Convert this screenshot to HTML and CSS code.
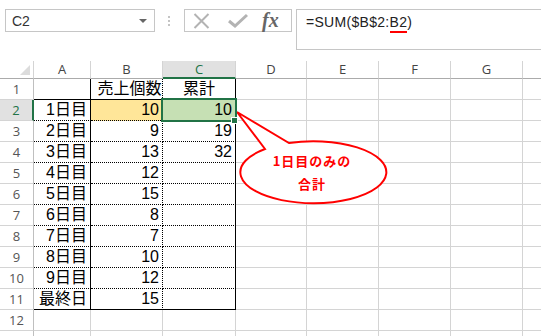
FILE: index.html
```html
<!DOCTYPE html>
<html lang="ja">
<head>
<meta charset="utf-8">
<title>Excel</title>
<link rel="stylesheet" href="styles.css">
</head>
<body>
<div class="app">
  <div class="fbar">
    <div class="namebox"><span class="nb-text">C2</span><span class="nb-arrow"></span></div>
    <div class="grip"><i></i><i></i><i></i></div>
    <div class="fbtns">
      <svg class="ic-x" width="17" height="16" viewBox="0 0 17 16"><path d="M1.5 1 L15.5 15 M15.5 1 L1.5 15" stroke="#b3b3b3" stroke-width="2" fill="none"/></svg>
      <svg class="ic-ok" width="20" height="15" viewBox="0 0 20 15"><path d="M1 8 L7 13 L19 2" stroke="#b3b3b3" stroke-width="3" fill="none"/></svg>
      <span class="fx">fx</span>
    </div>
    <div class="formula">=SUM($B$2:<span class="ref">B2</span>)</div>
  </div>

  <div class="sheet">
    <div class="corner"><span class="tri"></span></div>
    <div class="ch">A</div><div class="ch">B</div><div class="ch sel">C</div><div class="ch">D</div><div class="ch">E</div><div class="ch">F</div><div class="ch">G</div><div class="ch last"></div>

    <div class="rh">1</div>
    <div class="c kr kb"></div><div class="c t hb dr kb">売上個数</div><div class="c t kr kb">累計</div><div class="c"></div><div class="c"></div><div class="c"></div><div class="c"></div><div class="c last"></div>

    <div class="rh selr">2</div>
    <div class="c n kr db">1日目</div><div class="c n dr db yel">10</div><div class="c n kr db grn cur">10</div><div class="c"></div><div class="c"></div><div class="c"></div><div class="c"></div><div class="c last"></div>

    <div class="rh">3</div>
    <div class="c n kr db">2日目</div><div class="c n dr db">9</div><div class="c n kr db">19</div><div class="c"></div><div class="c"></div><div class="c"></div><div class="c"></div><div class="c last"></div>

    <div class="rh">4</div>
    <div class="c n kr db">3日目</div><div class="c n dr db">13</div><div class="c n kr db">32</div><div class="c"></div><div class="c"></div><div class="c"></div><div class="c"></div><div class="c last"></div>

    <div class="rh">5</div>
    <div class="c n kr db">4日目</div><div class="c n dr db">12</div><div class="c n kr db"></div><div class="c"></div><div class="c"></div><div class="c"></div><div class="c"></div><div class="c last"></div>

    <div class="rh">6</div>
    <div class="c n kr db">5日目</div><div class="c n dr db">15</div><div class="c n kr db"></div><div class="c"></div><div class="c"></div><div class="c"></div><div class="c"></div><div class="c last"></div>

    <div class="rh">7</div>
    <div class="c n kr db">6日目</div><div class="c n dr db">8</div><div class="c n kr db"></div><div class="c"></div><div class="c"></div><div class="c"></div><div class="c"></div><div class="c last"></div>

    <div class="rh">8</div>
    <div class="c n kr db">7日目</div><div class="c n dr db">7</div><div class="c n kr db"></div><div class="c"></div><div class="c"></div><div class="c"></div><div class="c"></div><div class="c last"></div>

    <div class="rh">9</div>
    <div class="c n kr db">8日目</div><div class="c n dr db">10</div><div class="c n kr db"></div><div class="c"></div><div class="c"></div><div class="c"></div><div class="c"></div><div class="c last"></div>

    <div class="rh">10</div>
    <div class="c n kr db">9日目</div><div class="c n dr db">12</div><div class="c n kr db"></div><div class="c"></div><div class="c"></div><div class="c"></div><div class="c"></div><div class="c last"></div>

    <div class="rh">11</div>
    <div class="c n kr kb">最終日</div><div class="c n dr kb">15</div><div class="c n kr kb"></div><div class="c"></div><div class="c"></div><div class="c"></div><div class="c"></div><div class="c last"></div>

    <div class="rh">12</div>
    <div class="c"></div><div class="c"></div><div class="c"></div><div class="c"></div><div class="c"></div><div class="c"></div><div class="c"></div><div class="c last"></div>

    <div class="rh"></div>
    <div class="c"></div><div class="c"></div><div class="c"></div><div class="c"></div><div class="c"></div><div class="c"></div><div class="c"></div><div class="c last"></div>
  </div>

  <svg class="callout" width="541" height="336" viewBox="0 0 541 336">
    <path d="M265 149 L237 112 L289 143 A73 31 0 1 1 265 149 Z" fill="#fff" stroke="#ff0000" stroke-width="2" stroke-linejoin="miter"/>
    <text x="312" y="166" class="co-text" text-anchor="middle">1日目のみの</text>
    <text x="312" y="189" class="co-text" text-anchor="middle">合計</text>
  </svg>
</div>
</body>
</html>
```

FILE: styles.css
```css
html, body {
  margin: 0;
  padding: 0;
  background: #fff;
  overflow: hidden;
}
body {
  width: 541px;
  height: 336px;
  font-family: "Liberation Sans", "Noto Sans CJK JP", sans-serif;
}
.app {
  position: relative;
  width: 541px;
  height: 336px;
  overflow: hidden;
}

/* formula bar */
.fbar {
  display: flex;
  align-items: flex-start;
  height: 61px;
  padding: 9px 0 0 5px;
  box-sizing: border-box;
}
.namebox {
  width: 150px;
  height: 23px;
  box-sizing: border-box;
  border: 1px solid #c6c6c6;
  display: flex;
  align-items: center;
  justify-content: space-between;
  padding: 0 7px 0 6px;
}
.nb-text {
  font-size: 14px;
  color: #333;
  line-height: 20px;
}
.nb-arrow {
  width: 0;
  height: 0;
  border-left: 4px solid transparent;
  border-right: 4px solid transparent;
  border-top: 4px solid #666;
  margin-top: 1px;
}
.grip {
  margin: 7px 0 0 13px;
  width: 3px;
  display: flex;
  flex-direction: column;
  gap: 2px;
}
.grip i {
  display: block;
  width: 2px;
  height: 2px;
  background: #c4c4c4;
}
.fbtns {
  margin-left: 13px;
  width: 108px;
  height: 23px;
  box-sizing: border-box;
  border: 1px solid #c6c6c6;
  display: flex;
  align-items: center;
}
.ic-x { margin-left: 8px; }
.ic-ok { margin-left: 18px; }
.fx {
  margin-left: 14px;
  font-family: "Liberation Serif", "DejaVu Serif", serif;
  font-style: italic;
  font-weight: 700;
  font-size: 20px;
  line-height: 20px;
  color: #666;
  margin-top: -2px;
}
.formula {
  margin-left: 4px;
  flex: 1;
  height: 41px;
  box-sizing: border-box;
  border: 1px solid #c6c6c6;
  border-right: none;
  padding: 2px 0 0 9px;
  font-size: 14px;
  line-height: 20px;
  color: #222;
  letter-spacing: 0.3px;
}
.ref {
  position: relative;
}
.ref::after {
  content: "";
  position: absolute;
  left: 0;
  right: 0;
  bottom: -3px;
  height: 2px;
  background: #ff0000;
}

/* sheet grid */
.sheet {
  display: grid;
  grid-template-columns: 34px 57px 72px 73px 71px 72px 72px 72px 1fr;
  grid-template-rows: 18px repeat(13, 21px);
}
.sheet > div {
  box-sizing: border-box;
  min-width: 0;
  overflow: visible;
  white-space: nowrap;
}
.corner {
  position: relative;
  border-right: 1px solid #d4d4d4;
  border-bottom: 1px solid #ababab;
}
.tri {
  position: absolute;
  right: 3px;
  bottom: 3px;
  width: 0;
  height: 0;
  border-left: 10px solid transparent;
  border-bottom: 10px solid #dcdcdc;
}
.ch {
  border-right: 1px solid #d4d4d4;
  border-bottom: 1px solid #ababab;
  text-align: center;
  font-family: "Open Sans", "Liberation Sans", sans-serif;
  font-size: 13px;
  line-height: 17px;
  color: #444;
}
.ch.sel {
  background: #e1e1e1;
  color: #217346;
  border-bottom: 2px solid #217346;
}
.ch.last, .c.last {
  border-right: none;
}
.rh {
  border-right: 1px solid #bfbfbf;
  border-bottom: 1px solid #d4d4d4;
  text-align: center;
  font-family: "Open Sans", "Liberation Sans", sans-serif;
  font-size: 13px;
  line-height: 20px;
  color: #555;
}
.rh.selr {
  background: #e1e1e1;
  color: #217346;
  border-right: 2px solid #217346;
}
.c {
  border-right: 1px solid #d4d4d4;
  border-bottom: 1px solid #d4d4d4;
  padding: 0 3px;
  font-size: 16px;
  line-height: 19px;
  color: #000;
}
.c.n { text-align: right; }
.c.t { text-align: center; }
.c.hb { padding-left: 6px; padding-right: 0; }
.c.kr { border-right: 1px solid #000; }
.c.dr { border-right: 1px dotted #000; }
.c.kb { border-bottom: 1px solid #000; }
.c.db { border-bottom: 1px dotted #000; }
.c.yel { background: #ffe699; }
.c.grn { background: #c6e0b4; }
.c.cur {
  position: relative;
}
.c.cur::after {
  content: "";
  position: absolute;
  left: -2px;
  top: -2px;
  right: -2px;
  bottom: -2px;
  border: 2px solid #217346;
  z-index: 2;
}
.c.cur::before {
  content: "";
  position: absolute;
  left: 68px;
  top: 17px;
  width: 5px;
  height: 5px;
  background: #217346;
  border: 1px solid #fff;
  z-index: 3;
}

/* callout */
.callout {
  position: absolute;
  left: 0;
  top: 0;
  pointer-events: none;
}
.co-text {
  font-family: "Noto Sans CJK JP", sans-serif;
  font-weight: 700;
  font-size: 13px;
  fill: #ff0000;
  letter-spacing: 1px;
}
```
